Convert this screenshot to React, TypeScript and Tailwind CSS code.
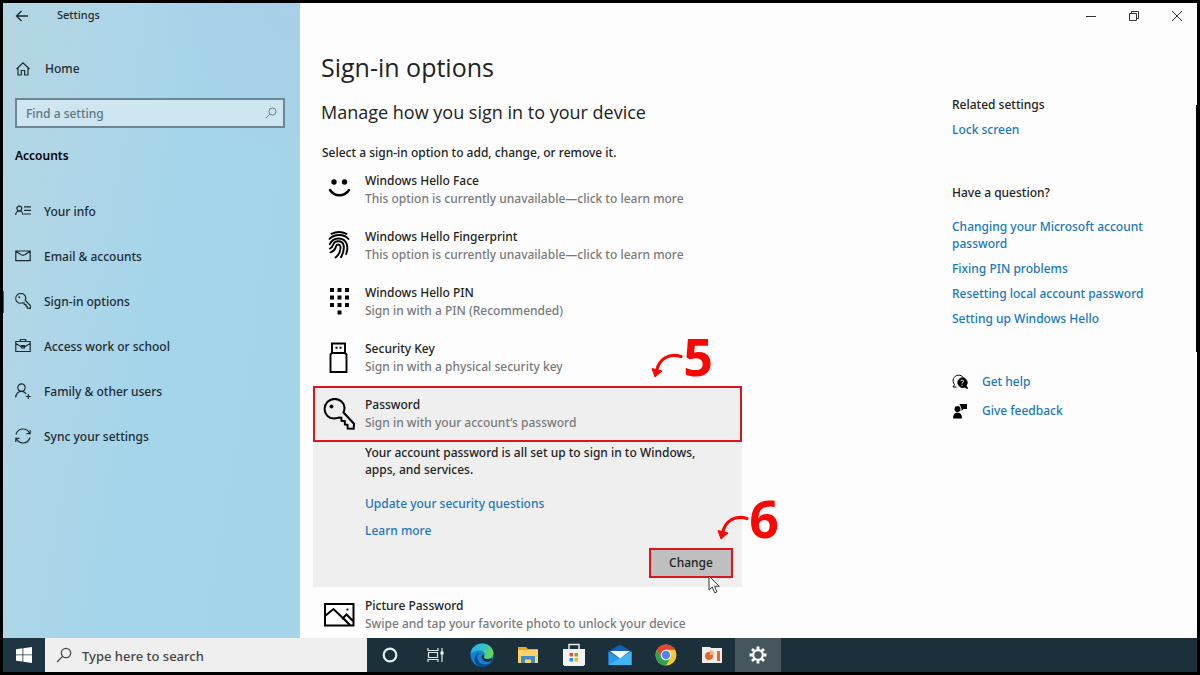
import React from 'react'

const HomeIcon = () => (
    <svg className="w-4 h-4" viewBox="0 0 16 16" fill="none" stroke="currentColor" strokeWidth="1.2">
        <path d="M1.500 8 8 1.800 14.500 8M3 6.800V14h3.300V9.500h3.400V14H13V6.800" />
    </svg>
)

const SearchIcon = ({ className }: { className: string }) => (
    <svg className={className} viewBox="0 0 16 16" fill="none" stroke="currentColor" strokeWidth="1.200">
        <circle cx="10" cy="6" r="4.700" />
        <path d="M6.600 9.400 1 15" />
    </svg>
)

const InfoIcon = () => (
    <svg className="w-4 h-4" viewBox="0 0 16 16" fill="none" stroke="currentColor" strokeWidth="1.200">
        <circle cx="4.300" cy="5.600" r="2.400" />
        <path d="M.6 12c.3-2.600 1.800-4 3.700-4s3.400 1.400 3.700 4M9 3.800h7M9 7.400h7M9 11h7" />
    </svg>
)

const MailIcon = () => (
    <svg className="w-4 h-4" viewBox="0 0 16 16" fill="none" stroke="currentColor" strokeWidth="1.200">
        <path d="M.8 3h14.400v9.600H.8zM1 3.300l4.800 3.300c1.500.9 3 .9 4.400 0L15 3.300" />
    </svg>
)

const KeyIcon = ({ className, strokeWidth }: { className: string; strokeWidth: number }) => (
    <svg className={className} viewBox="0 0 32 32" fill="none" stroke="currentColor" strokeWidth={strokeWidth}>
        <path d="M20.500 14.500c1.800-4.300.9-8.200-1.700-10.700C15-.1 8.500 0 4.600 3.800.7 7.700.6 13.800 4.200 17.600c2.800 2.900 7 3.500 11.300 2l2.800.1.200 3.100 3.300.3.100 3.300 2.600.5.200 3.600 6 .3.300-5.100z" />
        <circle cx="8.500" cy="8.500" r="1.500" fill="currentColor" strokeWidth="1" />
    </svg>
)

const BriefcaseIcon = () => (
    <svg className="w-4 h-4" viewBox="0 0 16 16" fill="none" stroke="currentColor" strokeWidth="1.200">
        <path d="M.8 3.500h14.400v10H.8zM5.300 3.500V1.500h5.400v2M.8 5.500l5.400 3.200h3.600l5.400-3.200" />
        <path d="M6.500 7.500h3v2.500h-3z" />
    </svg>
)

const FamilyIcon = () => (
    <svg className="w-4 h-4" viewBox="0 0 16 16" fill="none" stroke="currentColor" strokeWidth="1.200">
        <circle cx="6.500" cy="4.600" r="3.700" />
        <path d="M.6 14.500c.5-3.700 2.800-6.200 5.900-6.200 2 0 3.600.9 4.700 2.700M13.300 11v5M10.800 13.500h5" />
    </svg>
)

const SyncIcon = () => (
    <svg className="w-4 h-4" viewBox="0 0 16 16" fill="none" stroke="currentColor" strokeWidth="1.200">
        <path d="M1 6.500C2 3.200 4.700 1 8 1c3 0 5.500 1.700 6.700 4.400M15 9.500c-1 3.300-3.700 5.500-7 5.500-3 0-5.500-1.700-6.700-4.400M15.200 2v3.700h-3.700M.8 14v-3.700h3.700" />
    </svg>
)

const FaceIcon = () => (
    <svg className="w-8 h-8" viewBox="0 0 32 32">
        <circle cx="11" cy="8" r="2.700" />
        <circle cx="21.500" cy="8" r="2.700" />
        <path d="M7 16c4.500 7 14.500 7 19 0" fill="none" stroke="currentColor" strokeWidth="2.400" strokeLinecap="round" />
    </svg>
)

const FingerprintIcon = () => (
    <svg className="w-8 h-8" viewBox="0 0 32 32" fill="none" stroke="currentColor" strokeWidth="1.900" strokeLinecap="round">
        <path d="M8.500 3.800c4.700-2.200 10.300-2.200 15 0" />
        <path d="M6.500 8.800c5-5 14.500-5.300 19 .2" />
        <path d="M6.800 14.200c3.500-7.400 14-7.700 17 0 .9 2.700.5 6.500-.6 9.800" />
        <path d="M7 18.500c1.800-.8 2.500-2 3-3.500 1.700-5 9.200-5 10.600.2.800 3.800-.6 8.300-2.600 12" />
        <path d="M7.500 22.300c3-.9 4.900-3 5.500-6 .7-2.600 4.200-2.300 4.500.4.200 4.100-2 8.500-5 10.800" />
    </svg>
)

const PinIcon = () => (
    <svg className="w-8 h-8" viewBox="0 0 32 32">
        <path d="M7 2h4v4H7zM14.500 2h4v4h-4zM22 2h4v4h-4zM7 9.500h4v4H7zM14.500 9.500h4v4h-4zM22 9.500h4v4h-4zM7 17h4v4H7zM14.500 17h4v4h-4zM22 17h4v4h-4zM14.500 24.500h4v4h-4z" />
    </svg>
)

const UsbIcon = () => (
    <svg className="w-8 h-8" viewBox="0 0 32 32" fill="none" stroke="currentColor" strokeWidth="1.900">
        <path d="M9 11V1.500h13V11M7.500 12.500l1.500-1.500h13l1.500 1.500V30h-16z" />
        <path d="M12.500 5.800h2M16.500 5.800h2" />
    </svg>
)

const PictureIcon = () => (
    <svg className="w-8 h-8" viewBox="0 0 32 32" fill="none" stroke="currentColor" strokeWidth="2">
        <path d="M2 5h28.500v21.500H2zM2 17l8.500-7L27 26M19 20l4.500-4.500 7 7" />
        <path d="M20.500 19l5 6" strokeWidth="1.500" />
        <circle cx="24.500" cy="10.500" r="1.100" fill="currentColor" stroke="none" />
    </svg>
)

const Arrow = () => (
    <svg className="w-8 h-7" viewBox="0 0 32 28" fill="none">
        <path d="M30 4.500C18 .5 8 7 5.500 19" stroke="#fb0505" strokeWidth="3.200" strokeLinecap="round" />
        <path d="M1 16.500 11 19 4 25z" fill="#fb0505" stroke="#fb0505" strokeWidth="1" strokeLinejoin="round" />
    </svg>
)

const navItems = [
    { label: 'Your info', icon: <InfoIcon /> },
    { label: 'Email & accounts', icon: <MailIcon /> },
    { label: 'Sign-in options', icon: <KeyIcon className="w-4 h-4" strokeWidth={2.4} />, active: true },
    { label: 'Access work or school', icon: <BriefcaseIcon /> },
    { label: 'Family & other users', icon: <FamilyIcon /> },
    { label: 'Sync your settings', icon: <SyncIcon /> },
]

const options = [
    { title: 'Windows Hello Face', text: 'This option is currently unavailable—click to learn more', icon: <FaceIcon /> },
    { title: 'Windows Hello Fingerprint', text: 'This option is currently unavailable—click to learn more', icon: <FingerprintIcon /> },
    { title: 'Windows Hello PIN', text: 'Sign in with a PIN (Recommended)', icon: <PinIcon /> },
    { title: 'Security Key', text: 'Sign in with a physical security key', icon: <UsbIcon /> },
]

const Option = ({ title, text, icon }: { title: string; text: string; icon: React.ReactNode }) => (
    <button className="flex w-full items-center gap-[10px] pl-[10px] py-[10px] text-left">
        <span className="flex w-8 shrink-0 justify-center text-black">{icon}</span>
        <span className="leading-[18px]">
            <span className="block">{title}</span>
            <span className="block text-[#7a7a7a]">{text}</span>
        </span>
    </button>
)

const Sidebar = () => (
    <aside className="w-[297px] shrink-0 bg-[radial-gradient(circle_at_100%_0%,#a8cfe8_0%,transparent_22%),linear-gradient(100deg,#b3d6e2_0%,#b0d6e7_20%,#a5d5ea_50%,#a3d4ea_100%)] text-[#1d2b33]">
        <div className="flex h-[25px] items-center gap-7 pl-3">
            <button aria-label="Back">
                <svg className="w-[14px] h-3" viewBox="0 0 14 12" fill="none" stroke="currentColor" strokeWidth="1.300">
                    <path d="M13 6H1.500M6.500 1l-5 5 5 5" />
                </svg>
            </button>
            <span className="text-[11px]">Settings</span>
        </div>
        <a href="#home" className="mt-[29px] flex h-6 items-center gap-[14px] pl-3">
            <HomeIcon />
            Home
        </a>
        <div className="ml-3 mr-[15px] mt-[17px] flex h-[30px] items-center border-2 border-[#6b8794] bg-[#cde6f1] pl-[9px] pr-1.5">
            <input type="text" aria-label="Find a setting" placeholder="Find a setting" className="h-6 min-w-0 flex-1 bg-transparent outline-none placeholder:text-[#5d7682]" />
            <SearchIcon className="w-3 h-3 text-[#5d7682]" />
        </div>
        <h2 className="mt-[18px] pl-3 font-semibold leading-5 text-black">Accounts</h2>
        <nav className="mt-[23px]">
            {navItems.map((item) => (
                <a key={item.label} href="#nav" className="relative flex h-[45px] items-center gap-[13px] pl-3">
                    {item.active && <span className="absolute left-0 h-[22px] w-px bg-[#0a64c0]"></span>}
                    <span className="pb-0.5">{item.icon}</span>
                    {item.label}
                </a>
            ))}
        </nav>
    </aside>
)

const WindowButtons = () => (
    <div className="flex h-[25px] justify-end gap-[3px] text-[#333]">
        <button aria-label="Minimize" className="flex w-10 items-center justify-center">
            <svg className="w-[10px] h-[10px]" viewBox="0 0 10 10" stroke="currentColor"><path d="M0 5.500h10" /></svg>
        </button>
        <button aria-label="Restore" className="flex w-10 items-center justify-center">
            <svg className="w-[10px] h-[10px]" viewBox="0 0 10 10" fill="none" stroke="currentColor"><path d="M.5 2.500h7v7h-7zM2.500 2.500v-2h7v7h-2" /></svg>
        </button>
        <button aria-label="Close" className="flex w-10 items-center justify-center">
            <svg className="w-[10px] h-[10px]" viewBox="0 0 10 10" stroke="currentColor"><path d="M0 0l10 10M10 0L0 10" /></svg>
        </button>
    </div>
)

const PasswordPanel = () => (
    <div className="relative bg-[#efefef]">
        <div className="outline-2 -outline-offset-2 outline-[#d9161b]">
            <Option title="Password" text="Sign in with your account’s password" icon={<KeyIcon className="w-8 h-8" strokeWidth={2} />} />
        </div>
        <div className="pl-[52px] pr-[9px] pt-[2px] pb-[9px]">
            <p className="max-w-[345px] leading-[17px]">Your account password is all set up to sign in to Windows, apps, and services.</p>
            <a href="#questions" className="mt-[17px] block leading-[18px] text-[#1a78b8]">Update your security questions</a>
            <a href="#more" className="mt-[9px] block leading-[18px] text-[#1a78b8]">Learn more</a>
            <div className="mt-2 flex justify-end">
                <button className="h-[30px] w-[84px] border-2 border-[#d9161b] bg-[#bfbfbf]">Change</button>
            </div>
        </div>

        {/* Step 5 */}
        <div className="absolute right-[29px] -top-[60px] flex items-center font-['Open_Sans',sans-serif] text-[#fb0505]">
            <div className="mt-5"><Arrow /></div>
            <span className="text-[52px] font-bold leading-[60px]">5</span>
        </div>
        {/* Step 6 */}
        <div className="absolute -right-[37px] bottom-[39px] flex items-center font-['Open_Sans',sans-serif] text-[#fb0505]">
            <div className="mt-5"><Arrow /></div>
            <span className="text-[52px] font-bold leading-[60px]">6</span>
        </div>
        {/* Pointer */}
        <svg className="absolute right-[22px] -bottom-[7px] w-3 h-[19px]" viewBox="0 0 12 19" fill="#fff" stroke="#333">
            <path d="M1 1v14l3.300-3 2.400 5.800 2.300-1-2.400-5.500h4.600z" />
        </svg>
    </div>
)

const helpLinks = ['Fixing PIN problems', 'Resetting local account password', 'Setting up Windows Hello']

const Related = () => (
    <aside className="w-[245px] shrink-0 pt-[68px] leading-[17px] text-[#1a78b8]">
        <h3 className="text-[#222]">Related settings</h3>
        <a href="#lock" className="mt-2 block">Lock screen</a>
        <h3 className="mt-[46px] text-[#222]">Have a question?</h3>
        <div className="mt-[17px] flex flex-col gap-2 pr-10">
            <a href="#account">Changing your Microsoft account password</a>
            {helpLinks.map((link) => (
                <a key={link} href="#help">{link}</a>
            ))}
        </div>
        <a href="#gethelp" className="mt-[46px] flex items-center gap-[14px]">
            <svg className="w-4 h-4 text-black" viewBox="0 0 16 16" fill="none" stroke="currentColor">
                <path d="M1 13l1.500-2.500C-.5 7 1.500 1.500 6.300 1.200c2.200-.1 4 .8 5 2.300M1 13h3.500" />
                <path d="M10.300 3.800a4.800 4.800 0 1 0 2 9.300l3.200 1.400-1.300-3a4.800 4.800 0 0 0-3.900-7.700z" fill="currentColor" />
                <path d="M8.800 7.200c.2-1.600 3-1.400 2.700.3-.2 1-1.400 1-1.400 2.200M10.100 10.600v1.200" stroke="#fff" />
            </svg>
            Get help
        </a>
        <a href="#feedback" className="mt-3 flex items-center gap-[14px]">
            <svg className="w-4 h-4 text-black" viewBox="0 0 16 16" fill="currentColor">
                <circle cx="5.500" cy="6" r="3" />
                <path d="M1 15.500c0-4 1.500-6 4.500-6s4.500 2 4.500 6zM7.500 1H15v5h-3.500L9.500 8V5.500z" />
            </svg>
            Give feedback
        </a>
    </aside>
)

const Gear = () => (
    <svg className="w-[18px] h-[18px]" viewBox="0 0 18 18" fill="none" stroke="#fff">
        <circle cx="9" cy="9" r="4.800" strokeWidth="2.200" />
        <path d="M9 .5v3M9 14.500v3M.5 9h3M14.500 9h3M3 3l2.100 2.100M12.900 12.900 15 15M3 15l2.100-2.100M12.900 5.100 15 3" strokeWidth="2.800" />
    </svg>
)

const apps = [
    {
        name: 'Cortana',
        icon: <svg className="w-6 h-6" viewBox="0 0 24 24" fill="none"><circle cx="12" cy="12" r="6.300" stroke="#e6ecee" strokeWidth="2.200" /></svg>,
    },
    {
        name: 'Task View',
        icon: (
            <svg className="w-6 h-6" viewBox="0 0 24 24" fill="none" stroke="#dfe6e8" strokeWidth="1.200">
                <path d="M4 5v2.500h10V5M4 19v-2.500h10V19M4.500 9.500h9v5h-9zM18 5v14" />
                <path d="M16.500 8.500h3v3h-3z" fill="#fff" stroke="none" />
            </svg>
        ),
    },
    {
        name: 'Edge',
        icon: (
            <svg className="w-6 h-6" viewBox="0 0 24 24">
                <defs>
                    <linearGradient id="edgeTop" x1="0" y1="0" x2="1" y2="0.400">
                        <stop offset="0" stopColor="#2fa8e0" />
                        <stop offset="0.500" stopColor="#2bc0d3" />
                        <stop offset="1" stopColor="#62d65a" />
                    </linearGradient>
                </defs>
                <circle cx="12" cy="12" r="11.500" fill="#1782d4" />
                <path d="M.6 11C1 5 6 .5 12 .5c6.800 0 11.500 5 11.500 9.800 0 3.800-3 5.700-6.200 5.700-2.500 0-4-1-3.200-2.200 1.800-2.800-.1-6-4-6.300C6 7.200 2.200 8.500.6 11z" fill="url(#edgeTop)" />
                <path d="M9.500 9.500c-3 2.500-2.800 8 1.200 10.800 3.300 2 7.700 1.300 10.600-1.300-3.300 6-10.300 5-13.300 3.500C3 19.500 3 12 9.500 9.500z" fill="#0f4a95" />
                <path d="M14 13.800c-.8 1.200.7 2.200 3.300 2.200 1.500 0 3-.4 4.200-1.200l.7 2.200c-3 3-8.200 2.200-10-1-.8-1.600-.6-3.400.3-4.500 1.200.2 2 1.200 1.500 2.300z" fill="#1b3340" />
            </svg>
        ),
    },
    {
        name: 'File Explorer',
        icon: (
            <svg className="w-6 h-6" viewBox="0 0 24 24">
                <path d="M2 4h8l2 2h10v14H2z" fill="#e9a825" />
                <path d="M2 7h20v13H2z" fill="#fbd266" />
                <path d="M5 20v-7h14v7h-4v-3.500H9V20z" fill="#3d8cc7" />
            </svg>
        ),
    },
    {
        name: 'Microsoft Store',
        icon: (
            <svg className="w-6 h-6" viewBox="0 0 24 24">
                <path d="M7 7V1.500h10V7" fill="none" stroke="#e8ecee" strokeWidth="1.500" />
                <path d="M1 6h22v15.500L21.500 23h-19L1 21.500z" fill="#f3f3f3" />
                <path d="M7.500 10H11v3.500H7.500z" fill="#e8502f" />
                <path d="M12.500 10H16v3.500h-3.500z" fill="#7ab51d" />
                <path d="M7.500 15H11v3.500H7.500z" fill="#1c98dc" />
                <path d="M12.500 15H16v3.500h-3.500z" fill="#f8b413" />
            </svg>
        ),
    },
    {
        name: 'Mail',
        icon: (
            <svg className="w-6 h-6" viewBox="0 0 24 24">
                <path d="M.5 8.500 12 1.500l11.500 7V22H.5z" fill="#0f62b5" />
                <path d="M.5 8.500 12 16l11.500-7.500V22H.5z" fill="#2a9ae8" />
                <path d="M23.500 8.500V22H.5z" fill="#44b5f3" />
                <path d="M2 8h20l-10 7.500z" fill="#f2f7fb" />
            </svg>
        ),
    },
    {
        name: 'Chrome',
        icon: (
            <svg className="w-6 h-6" viewBox="0 0 24 24">
                <circle cx="12" cy="12" r="10.500" fill="#fbc928" />
                <path d="M2.900 6.750A10.500 10.500 0 0 1 21.100 6.750H12l-4.600 7.900z" fill="#e54335" />
                <path d="M2.900 6.750A10.500 10.500 0 0 0 12 22.500l4.550-7.870L12 17.250l-4.550-2.620z" fill="#31a350" />
                <circle cx="12" cy="12" r="5.250" fill="#fff" />
                <circle cx="12" cy="12" r="4.200" fill="#4a86ee" />
            </svg>
        ),
    },
    {
        name: 'Recorder',
        icon: (
            <svg className="w-6 h-6" viewBox="0 0 24 24">
                <path d="M2 4h8l1 1h11v15H2z" fill="#f0eeec" />
                <circle cx="9" cy="13" r="4" fill="#e0692c" />
                <path d="M10 7a5 5 0 0 1 4.500 5H10z" fill="#f3b08c" />
                <path d="M17 8h3v10h-3z" fill="#e0692c" />
            </svg>
        ),
    },
]

const Taskbar = () => (
    <footer className="flex h-[34px] bg-[#1b303b]">
        <button aria-label="Start" className="flex w-[42px] items-center justify-center bg-[#1d3641]">
            <svg className="w-4 h-4" viewBox="0 0 16 16" fill="#fff">
                <path d="M0 2.200 6.500 1.300v6.200H0zM7.300 1.200 16 0v7.500H7.300zM0 8.300h6.500v6.300L0 13.700zM7.300 8.300H16V16l-8.700-1.200z" />
            </svg>
        </button>
        <div className="flex w-[322px] items-center gap-[10px] bg-[#efefef] pl-[11px] text-[#444]">
            <SearchIcon className="w-4 h-4 shrink-0" />
            <input type="text" aria-label="Type here to search" placeholder="Type here to search" className="h-full min-w-0 flex-1 bg-transparent pt-0.5 text-[13px] outline-none placeholder:text-[#444]" />
        </div>
        {apps.map((app) => (
            <button key={app.name} aria-label={app.name} className="flex w-[46px] items-center justify-center">
                {app.icon}
            </button>
        ))}
        <button aria-label="Settings" className="flex w-[46px] items-center justify-center bg-[#46565f]">
            <Gear />
        </button>
    </footer>
)

const App = () => {
    return (
        <div className="flex min-h-screen flex-col border-[3px] border-black bg-[#fdfdfd] font-['Noto_Sans','Open_Sans',sans-serif] text-[12px] font-medium text-[#222]">
            <div className="flex flex-1">
                <Sidebar />
                <main className="relative min-w-0 flex-1">
                    <WindowButtons />
                    <div className="flex justify-between pl-[13px]">
                        <section className="w-full max-w-[429px]">
                            <h1 className="mt-[23px] pl-2 font-['Open_Sans',sans-serif] text-[25px] font-normal leading-8">Sign-in options</h1>
                            <h2 className="mt-[17px] pl-2 font-['Open_Sans',sans-serif] text-[18px] font-normal leading-6">Manage how you sign in to your device</h2>
                            <p className="mt-5 pl-[9px] leading-[18px]">Select a sign-in option to add, change, or remove it.</p>
                            {options.map((option) => (
                                <Option key={option.title} {...option} />
                            ))}
                            <PasswordPanel />
                            <div className="-mb-1.5">
                                <Option title="Picture Password" text="Swipe and tap your favorite photo to unlock your device" icon={<PictureIcon />} />
                            </div>
                        </section>
                        <Related />
                    </div>
                    <span className="absolute right-0 top-[102px] h-[247px] w-px bg-black"></span>
                </main>
            </div>
            <Taskbar />
        </div>
    )
}

export default App
